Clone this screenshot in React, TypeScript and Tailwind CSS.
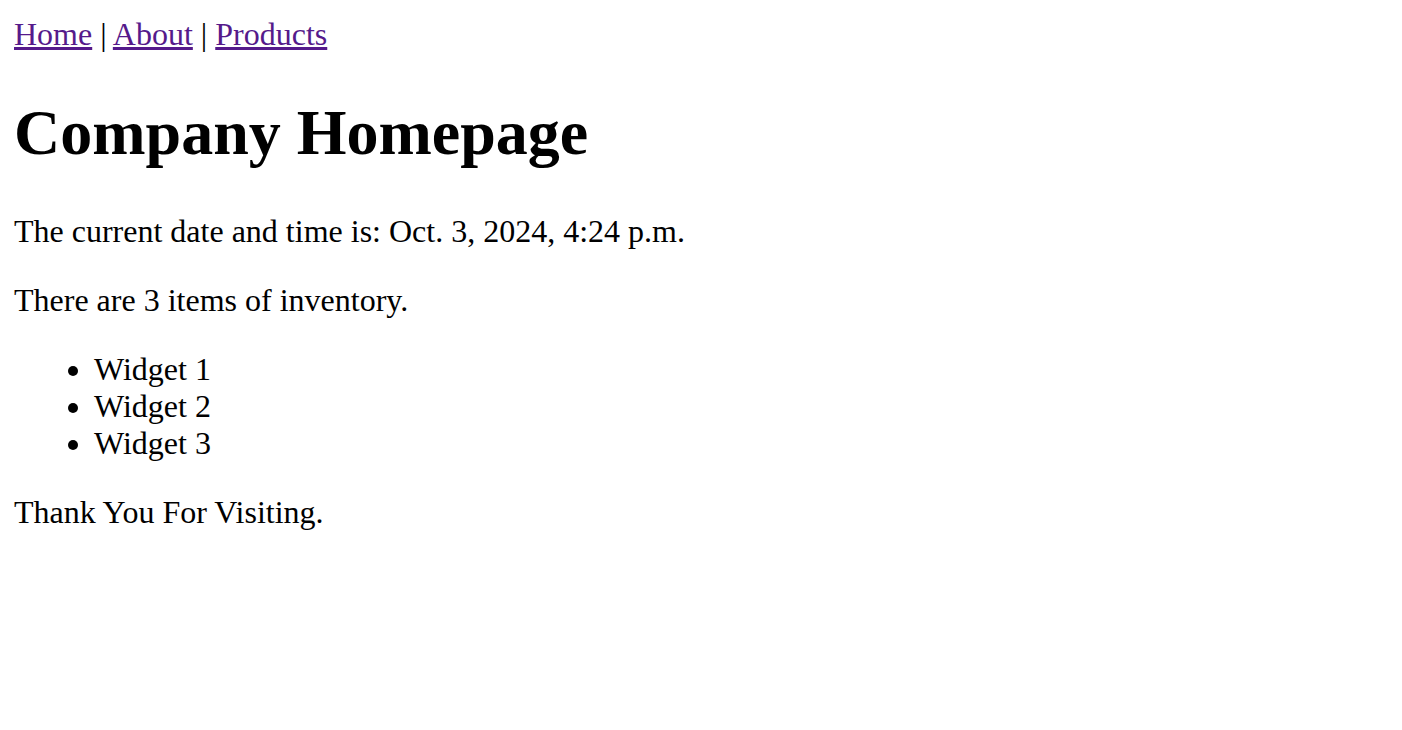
import React from "react";

const items = ["Widget 1", "Widget 2", "Widget 3"];

export default function App() {
  return (
    <div className="min-h-screen bg-white text-black p-[16px] pl-[14px] font-['Liberation_Serif','Times_New_Roman',serif] text-[32px] leading-[37px]">
      <div>
        <a href="#" className="text-[#551a8b] underline">
          Home
        </a>{" "}
        |{" "}
        <a href="#" className="text-[#551a8b] underline">
          About
        </a>{" "}
        |{" "}
        <a href="#" className="text-[#551a8b] underline">
          Products
        </a>
      </div>
      <h1 className="text-[64px] leading-[74px] font-bold my-[43px]">Company Homepage</h1>
      <p className="my-[32px]">The current date and time is: Oct. 3, 2024, 4:24 p.m.</p>
      <p className="my-[32px]">There are 3 items of inventory.</p>
      <ul className="list-disc pl-[80px] my-[32px]">
        {items.map((itm, i) => (
          <li key={`item${i}`}>{itm}</li>
        ))}
      </ul>
      <p className="my-[32px]">Thank You For Visiting.</p>
    </div>
  );
}
